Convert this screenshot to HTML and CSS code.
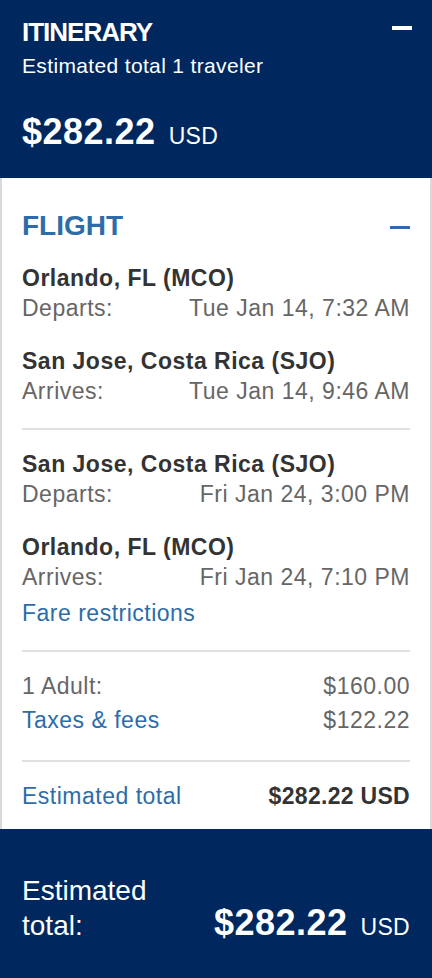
FILE: index.html
```html
<!DOCTYPE html>
<html lang="en">
<head>
  <meta charset="UTF-8">
  <meta name="viewport" content="width=device-width, initial-scale=1.0">
  <title>Itinerary</title>
  <link rel="stylesheet" href="styles.css">
</head>
<body>

<div class="itinerary">

  <!-- Riepilogo in alto -->
  <header class="summary">
    <div class="summary-top">
      <h1 class="summary-title">ITINERARY</h1>
      <span class="collapse collapse-light"></span>
    </div>
    <p class="summary-sub">Estimated total 1 traveler</p>
    <p class="price"><strong>$282.22</strong> <span>USD</span></p>
  </header>

  <section class="card">
    <div class="card-head">
      <h2>FLIGHT</h2>
      <span class="collapse"></span>
    </div>

    <div class="leg">
      <div class="stop">
        <div class="stop-name">Orlando, FL (MCO)</div>
        <div class="row"><span>Departs:</span><span>Tue Jan 14, 7:32 AM</span></div>
      </div>
      <div class="stop">
        <div class="stop-name">San Jose, Costa Rica (SJO)</div>
        <div class="row"><span>Arrives:</span><span>Tue Jan 14, 9:46 AM</span></div>
      </div>
    </div>

    <hr class="divider">

    <div class="leg">
      <div class="stop">
        <div class="stop-name">San Jose, Costa Rica (SJO)</div>
        <div class="row"><span>Departs:</span><span>Fri Jan 24, 3:00 PM</span></div>
      </div>
      <div class="stop">
        <div class="stop-name">Orlando, FL (MCO)</div>
        <div class="row"><span>Arrives:</span><span>Fri Jan 24, 7:10 PM</span></div>
      </div>
      <a class="link fare-link" href="#">Fare restrictions</a>
    </div>

    <hr class="divider">

    <div class="prices">
      <div class="row"><span>1 Adult:</span><span>$160.00</span></div>
      <div class="row"><a class="link" href="#">Taxes &amp; fees</a><span>$122.22</span></div>
    </div>

    <hr class="divider">

    <div class="row total-row">
      <a class="link" href="#">Estimated total</a>
      <strong>$282.22 USD</strong>
    </div>
  </section>

  <!-- Totale in basso -->
  <footer class="total">
    <div class="total-main">
      <div class="total-label">Estimated total:</div>
      <p class="price"><strong>$282.22</strong> <span>USD</span></p>
    </div>
    <div class="total-more">Additional details</div>
  </footer>

</div>

</body>
</html>
```

FILE: styles.css
```css
body {
  margin: 0;
  background: #fff;
  font-family: 'Liberation Sans', Arial, sans-serif;
}

.itinerary {
  width: 432px;
  height: 978px;
  overflow: hidden;
}

/* Barra blu in alto */
.summary {
  background: #00285e;
  color: #fff;
  padding: 16px 20px 26px 22px;
}

.summary-top {
  display: flex;
  justify-content: space-between;
  align-items: flex-start;
}

.summary-title {
  margin: 0;
  font-size: 26px;
  line-height: 32px;
  font-weight: bold;
  letter-spacing: -1px;
}

.collapse {
  display: block;
  width: 20px;
  height: 3px;
  background: #2d6ca8;
  margin-top: 16px;
}

.collapse-light {
  background: #fff;
  height: 4px;
  margin-top: 10px;
}

.summary-sub {
  margin: 5px 0 0;
  font-size: 21px;
  line-height: 26px;
  letter-spacing: 0.35px;
}

.price {
  margin: 33px 0 0;
  font-size: 36px;
  line-height: 40px;
  white-space: nowrap;
}

.price strong {
  letter-spacing: 0.5px;
}

.price span {
  font-size: 23px;
  line-height: 1;
  margin-left: 3px;
  letter-spacing: 0.3px;
}

/* Scheda bianca */
.card {
  border-left: 2px solid #d9d9d9;
  border-right: 2px solid #d9d9d9;
  padding: 32px 20px 18px 20px;
  font-size: 23px;
  letter-spacing: 0.5px;
  color: #666;
}

.card-head {
  display: flex;
  justify-content: space-between;
  align-items: flex-start;
}

.card-head h2 {
  margin: 0;
  font-size: 28px;
  line-height: 32px;
  font-weight: bold;
  color: #2d6ca8;
  letter-spacing: 0;
}

.leg {
  display: flex;
  flex-direction: column;
  gap: 23px;
  line-height: 30px;
}

.card-head + .leg {
  margin-top: 21px;
}

.divider + .leg {
  margin-top: 19px;
}

.stop-name {
  font-weight: bold;
  color: #333;
}

.row {
  display: flex;
  justify-content: space-between;
}

.link {
  color: #2d6ca8;
  text-decoration: none;
}

.fare-link {
  margin-top: -17px;
}

.divider {
  border: 0;
  height: 2px;
  background: #e0e0e0;
  margin: 22px 0 0;
}

.prices {
  margin-top: 17px;
  line-height: 34px;
  margin-bottom: 23px;
}

.total-row {
  margin-top: 19px;
  line-height: 30px;
}

.total-row strong {
  color: #333;
  letter-spacing: 0.3px;
}

/* Totale blu in basso */
.total {
  background: #00285e;
  color: #fff;
  padding: 44px 22px 0 22px;
  height: 200px;
}

.total-main {
  display: flex;
  justify-content: space-between;
  align-items: flex-end;
}

.total-label {
  width: 150px;
  font-size: 28px;
  line-height: 35px;
}

.total .price {
  margin: 0;
}

.total-more {
  margin-top: 31px;
  padding-left: 101px;
  font-size: 22px;
  line-height: 30px;
  font-weight: bold;
}
```
